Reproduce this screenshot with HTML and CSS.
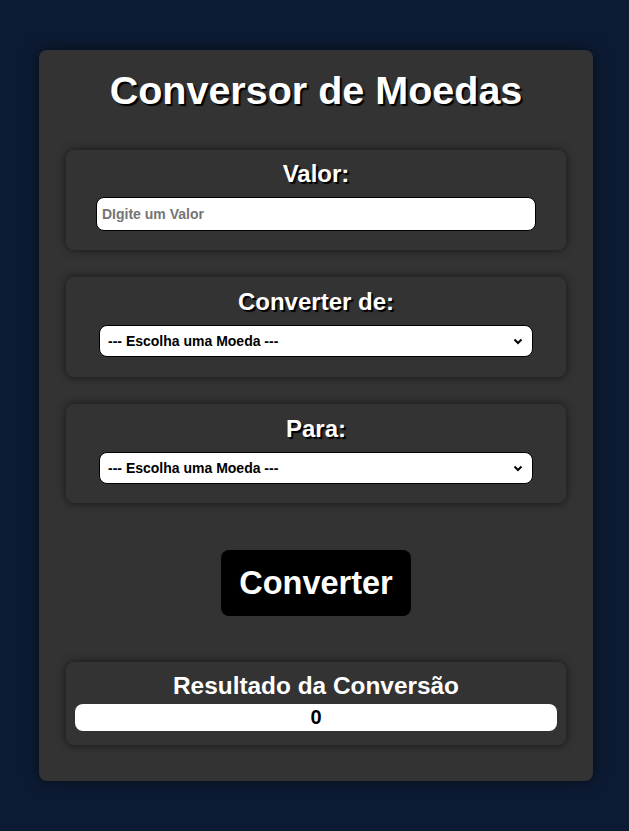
FILE: index.html
```html
<!DOCTYPE html>
<html lang="pt-BR">
<head>
<meta charset="utf-8">
<title>Conversor de Moedas</title>
<link rel="stylesheet" href="styles.css">
</head>
<body>
<main class="card">
  <h1 class="title">Conversor de Moedas</h1>
  <div class="field field-first">
    <label class="label" for="valor">Valor:</label>
    <input class="input" id="valor" type="text" placeholder="DIgite um Valor">
  </div>
  <div class="field field-select">
    <label class="label" for="de">Converter de:</label>
    <select class="select" id="de"><option>--- Escolha uma Moeda ---</option></select>
  </div>
  <div class="field field-select field-last">
    <label class="label" for="para">Para:</label>
    <select class="select" id="para"><option>--- Escolha uma Moeda ---</option></select>
  </div>
  <button class="btn" type="button">Converter</button>
  <div class="result">
    <div class="label label-result">Resultado da Conversão</div>
    <div class="output">0</div>
  </div>
</main>
</body>
</html>
```
FILE: styles.css
```css
* { box-sizing: border-box; }
html, body { margin: 0; }
body {
  background: #0c1b33;
  font-family: "Liberation Sans", Arial, sans-serif;
  padding: 50px 0;
  min-height: 100vh;
}
.card {
  width: 554px;
  margin-left: 39px;
  background: #333333;
  border-radius: 8px;
  box-shadow: 0 0 14px rgba(0, 0, 0, 0.55);
  padding: 17px 27px 36px;
  display: flex;
  flex-direction: column;
  align-items: center;
}
.title {
  margin: 0;
  font-size: 39.5px;
  line-height: 46px;
  font-weight: bold;
  color: #fff;
  text-shadow: 2px 2px 1px #000;
}
.field {
  width: 500px;
  background: #333333;
  border-radius: 8px;
  box-shadow: 0 0 8px rgba(0, 0, 0, 0.6);
  display: flex;
  flex-direction: column;
  align-items: center;
  gap: 9px;
  margin-top: 27px;
  padding: 11px 0 20px;
}
.field-first { margin-top: 37px; padding: 10px 0 19px; }
.field-last { padding-bottom: 19px; }
.label {
  font-size: 24px;
  line-height: 28px;
  font-weight: bold;
  color: #fff;
  text-shadow: 2px 2px 1px #000;
}
.label-result { font-size: 24.4px; text-shadow: none; }
.input {
  width: 440px;
  height: 34px;
  border: 1px solid #000;
  border-radius: 8px;
  background: #fff;
  padding: 0 5px;
  font-family: inherit;
  font-size: 14px;
  font-weight: bold;
  color: #000;
}
.input::placeholder { color: #757575; }
.select {
  -webkit-appearance: none;
  appearance: none;
  width: 434px;
  height: 32px;
  border: 1px solid #000;
  border-radius: 8px;
  background: #fff url("data:image/svg+xml;utf8,<svg xmlns='http://www.w3.org/2000/svg' width='10' height='7' viewBox='0 0 10 7'><path d='M1.5 1.5 L5 5 L8.5 1.5' fill='none' stroke='black' stroke-width='2'/></svg>") no-repeat right 9px center;
  padding: 0 4px 0 8px;
  font-family: inherit;
  font-size: 14px;
  font-weight: bold;
  color: #000;
}
.btn {
  margin-top: 47px;
  background: #000;
  color: #fff;
  border: none;
  border-radius: 8px;
  font-family: inherit;
  font-size: 32.5px;
  line-height: 38px;
  font-weight: bold;
  padding: 14px 18px;
}
.result {
  width: 500px;
  margin-top: 46px;
  background: #333333;
  border-radius: 8px;
  box-shadow: 0 0 8px rgba(0, 0, 0, 0.6);
  display: flex;
  flex-direction: column;
  align-items: center;
  gap: 4px;
  padding: 10px 9px 14px;
}
.output {
  align-self: stretch;
  height: 27px;
  background: #fff;
  border-radius: 8px;
  text-align: center;
  font-size: 20px;
  line-height: 27px;
  font-weight: bold;
  color: #000;
}
```
